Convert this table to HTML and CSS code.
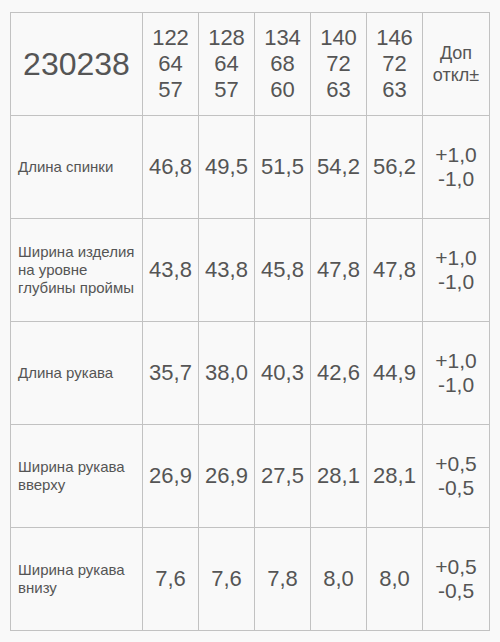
FILE: index.html
```html
<!DOCTYPE html>
<html lang="ru">
<head>
<meta charset="utf-8">
<title>230238</title>
<link rel="stylesheet" href="styles.css">
</head>
<body>
<table class="sizes">
  <colgroup>
    <col class="c-label">
    <col class="c-size"><col class="c-size"><col class="c-size"><col class="c-size"><col class="c-size">
    <col class="c-tol">
  </colgroup>
  <thead>
    <tr>
      <th class="model">230238</th>
      <th class="size">122<br>64<br>57</th>
      <th class="size">128<br>64<br>57</th>
      <th class="size">134<br>68<br>60</th>
      <th class="size">140<br>72<br>63</th>
      <th class="size">146<br>72<br>63</th>
      <th class="tolhead">Доп<br>откл±</th>
    </tr>
  </thead>
  <tbody>
    <tr>
      <td class="label">Длина спинки</td>
      <td class="val">46,8</td><td class="val">49,5</td><td class="val">51,5</td><td class="val">54,2</td><td class="val">56,2</td>
      <td class="tol">+1,0<br>-1,0</td>
    </tr>
    <tr>
      <td class="label">Ширина изделия на уровне глубины проймы</td>
      <td class="val">43,8</td><td class="val">43,8</td><td class="val">45,8</td><td class="val">47,8</td><td class="val">47,8</td>
      <td class="tol">+1,0<br>-1,0</td>
    </tr>
    <tr>
      <td class="label">Длина рукава</td>
      <td class="val">35,7</td><td class="val">38,0</td><td class="val">40,3</td><td class="val">42,6</td><td class="val">44,9</td>
      <td class="tol">+1,0<br>-1,0</td>
    </tr>
    <tr>
      <td class="label">Ширина рукава вверху</td>
      <td class="val">26,9</td><td class="val">26,9</td><td class="val">27,5</td><td class="val">28,1</td><td class="val">28,1</td>
      <td class="tol">+0,5<br>-0,5</td>
    </tr>
    <tr>
      <td class="label">Ширина рукава внизу</td>
      <td class="val">7,6</td><td class="val">7,6</td><td class="val">7,8</td><td class="val">8,0</td><td class="val">8,0</td>
      <td class="tol">+0,5<br>-0,5</td>
    </tr>
  </tbody>
</table>
</body>
</html>
```
FILE: styles.css
```css
html, body {
  margin: 0;
  padding: 0;
  background: #f9f9f9;
}
body {
  padding: 12px 0 0 10px;
  font-family: "Liberation Sans", Arial, sans-serif;
  color: #555555;
}
.sizes {
  border-collapse: collapse;
  table-layout: fixed;
  width: 479px;
}
.c-label { width: 132px; }
.c-size { width: 56px; }
.c-tol { width: 67px; }
.sizes th,
.sizes td {
  border: 1px solid #c2c2c2;
  height: 102px;
  padding: 0;
  text-align: center;
  vertical-align: middle;
  font-weight: normal;
}
.model {
  font-size: 32px;
}
.size {
  font-size: 22px;
  line-height: 26px;
}
.tolhead {
  font-size: 18px;
  line-height: 22px;
}
.label {
  text-align: left !important;
  padding: 0 4px 0 7px !important;
  font-size: 15px;
  line-height: 18px;
}
.val {
  font-size: 22px;
}
.tol {
  font-size: 21px;
  line-height: 24px;
}
```
